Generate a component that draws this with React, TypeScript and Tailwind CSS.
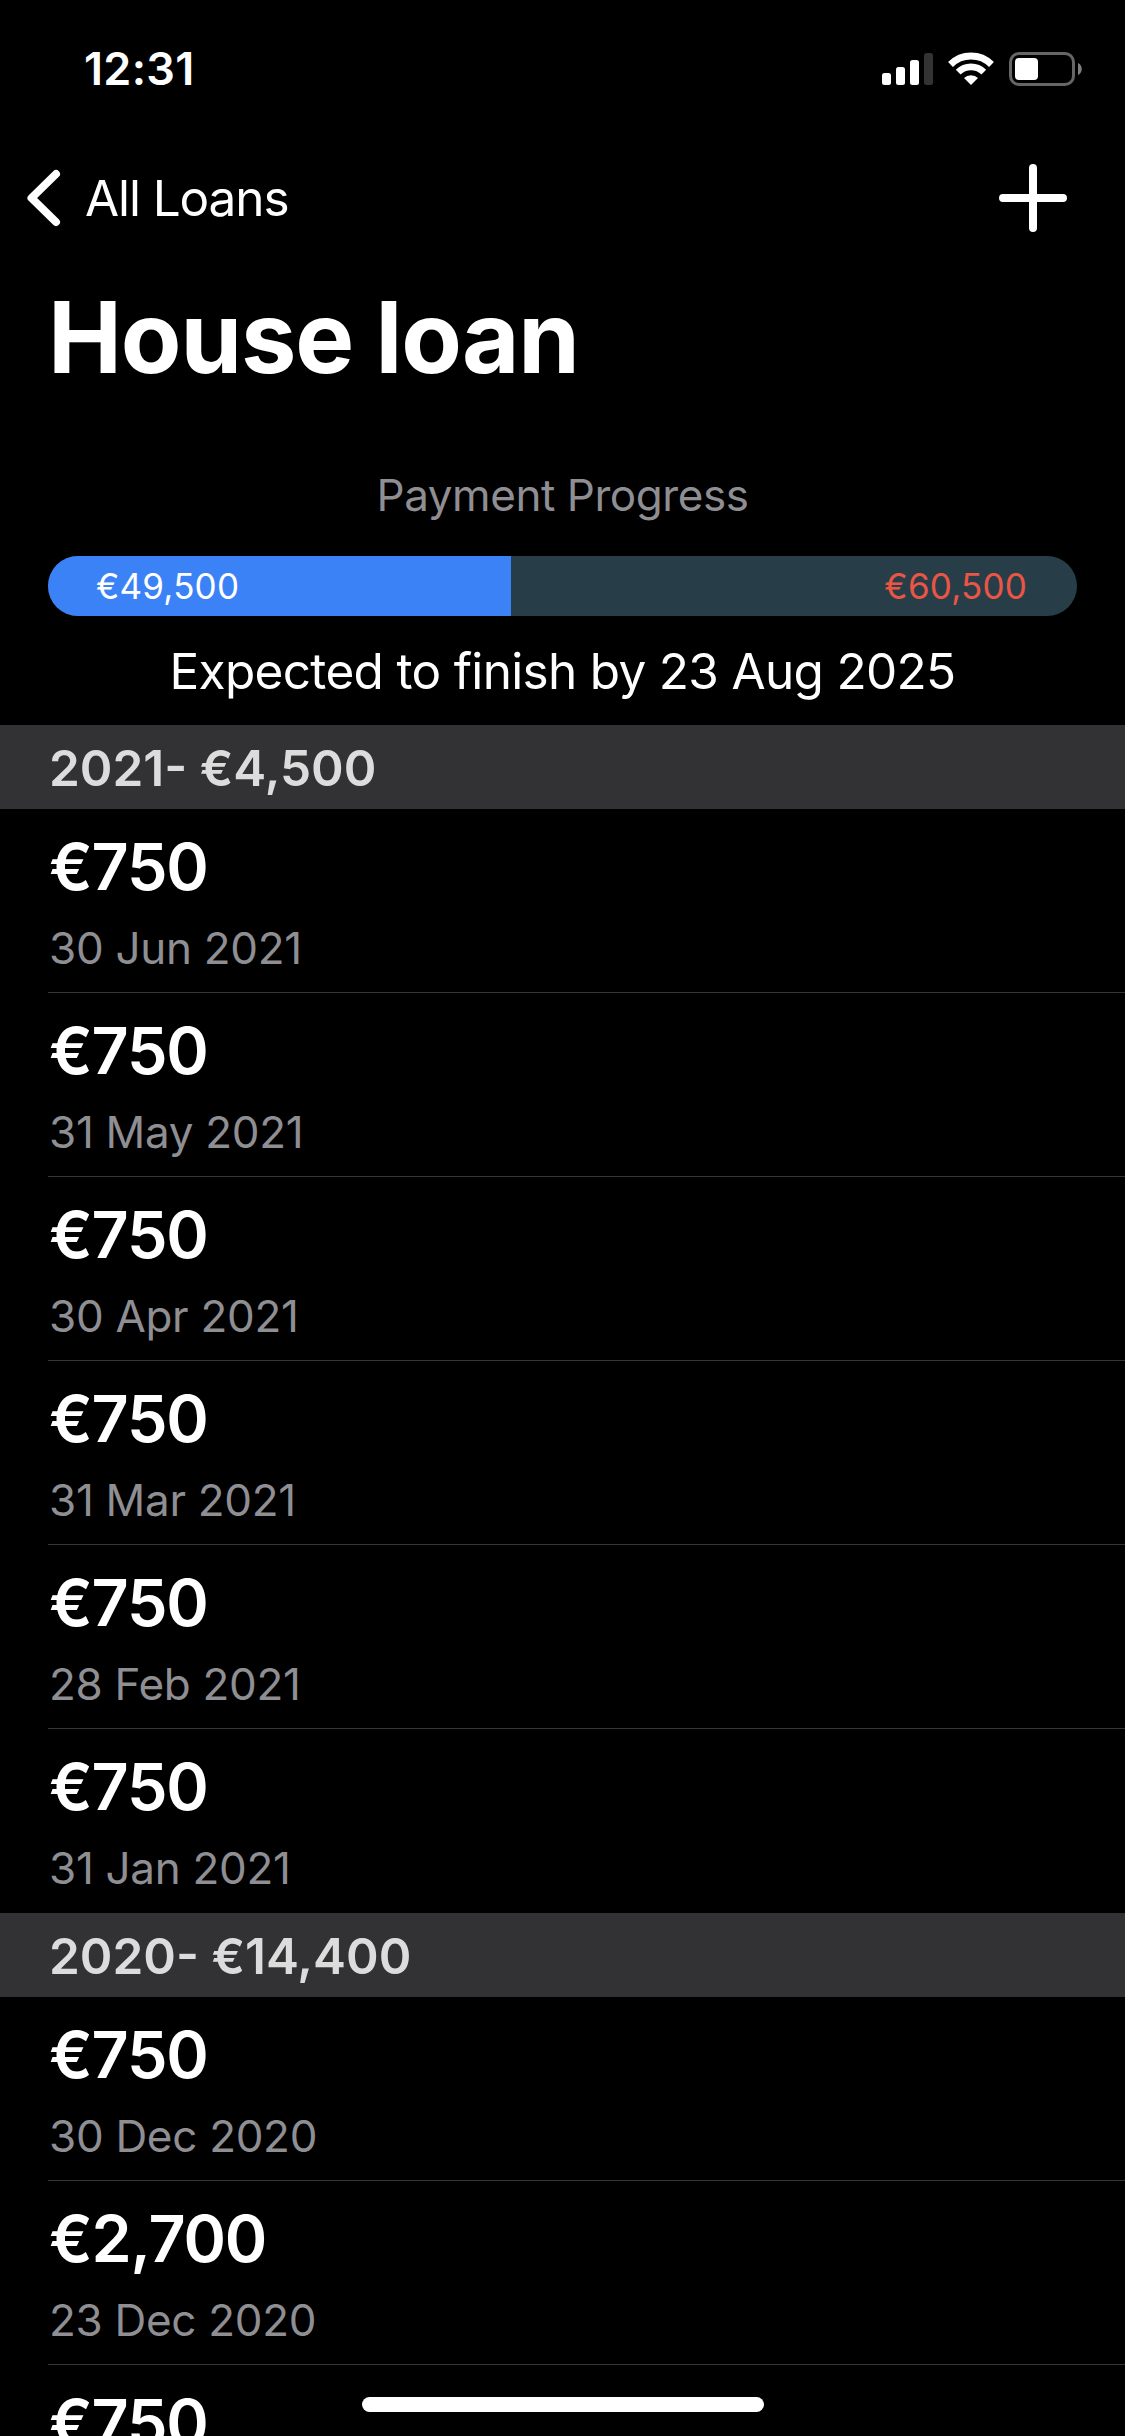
import { clsx } from "clsx"

type Payment = {
  amount: string
  date?: string
}

type YearGroup = {
  title: string
  payments: Payment[]
}

const groups: YearGroup[] = [
  {
    title: "2021- €4,500",
    payments: [
      { amount: "€750", date: "30 Jun 2021" },
      { amount: "€750", date: "31 May 2021" },
      { amount: "€750", date: "30 Apr 2021" },
      { amount: "€750", date: "31 Mar 2021" },
      { amount: "€750", date: "28 Feb 2021" },
      { amount: "€750", date: "31 Jan 2021" },
    ],
  },
  {
    title: "2020- €14,400",
    payments: [
      { amount: "€750", date: "30 Dec 2020" },
      { amount: "€2,700", date: "23 Dec 2020" },
      { amount: "€750" },
    ],
  },
]

const paid = 49500
const remaining = 60500

function StatusBar() {
  return (
    <div className="flex h-[138px] shrink-0 items-start justify-between pl-[84px] pr-[42px]">
      <span className="mt-[42px] text-[45px] leading-[54px] font-semibold tracking-[0.3px]">
        12:31
      </span>
      <div className="mt-[52px] flex items-start">
        <svg width="52" height="34" viewBox="0 0 52 34" fill="#fff">
          <rect x="0" y="21" width="9" height="12" rx="2.5" />
          <rect x="14" y="15" width="9" height="18" rx="2.5" />
          <rect x="28" y="8" width="9" height="25" rx="2.5" />
          <rect x="42" y="1" width="9" height="32" rx="2.5" fill="#333" />
        </svg>
        <svg className="ml-[14px]" width="46" height="34" viewBox="0 0 46 34" fill="none" stroke="#fff">
          <path d="M2.5 12.5a29 29 0 0 1 41 0" strokeWidth="6.8" />
          <path d="M10.2 20.2a18.1 18.1 0 0 1 25.6 0" strokeWidth="6.6" />
          <path d="M23 33l-7-7a10 10 0 0 1 14 0z" fill="#fff" stroke="none" />
        </svg>
        <svg className="ml-[15px]" width="74" height="34" viewBox="0 0 74 34">
          <rect x="1.5" y="1.5" width="63" height="31" rx="8.5" fill="none" stroke="#666" strokeWidth="3" />
          <rect x="6" y="6" width="23" height="22" rx="4" fill="#fff" />
          <path d="M69 11c5 2 5 10 0 12z" fill="#808080" />
        </svg>
      </div>
    </div>
  )
}

function NavBar() {
  return (
    <div className="flex h-[120px] shrink-0 items-center justify-between pl-[27px] pr-[58px]">
      <button className="flex items-center">
        <svg width="34" height="58" viewBox="0 0 34 58" fill="none" stroke="#fff" strokeWidth="8" strokeLinecap="round" strokeLinejoin="round">
          <path d="M29 5 4.5 29 29 53" />
        </svg>
        <span className="ml-[24px] text-[49.5px] leading-[60px] tracking-[-1.1px]">
          All Loans
        </span>
      </button>
      <button>
        <svg width="68" height="68" viewBox="0 0 68 68" stroke="#fff" strokeWidth="8" strokeLinecap="round">
          <path d="M34 4v60M4 34h60" />
        </svg>
      </button>
    </div>
  )
}

function Progress() {
  const ratio = paid / (paid + remaining)
  return (
    <div className="mt-[70px] shrink-0 px-[48px]">
      <p className="text-center text-[44px] leading-[54px] tracking-[-0.45px] text-[#8e8e93]">
        Payment Progress
      </p>
      <div className="relative mt-[34px] flex h-[60px] items-center justify-between overflow-hidden rounded-full bg-[#273e49] pl-[48px] pr-[50px] text-[35px] tracking-[0.2px]">
        <div
          className="absolute inset-y-0 left-0 bg-[#3b82f7]"
          style={{ width: `${ratio * 100}%` }}
        />
        <span className="relative">€{paid.toLocaleString("en-US")}</span>
        <span className="relative text-[#eb5545]">€{remaining.toLocaleString("en-US")}</span>
      </div>
      <p className="mt-[25px] text-center text-[49.5px] leading-[60px] tracking-[-0.68px]">
        Expected to finish by 23 Aug 2025
      </p>
    </div>
  )
}

function PaymentRow({ payment, last }: { payment: Payment; last: boolean }) {
  return (
    <li
      className={clsx(
        "ml-[48px] h-[184px] border-b pl-px",
        last ? "border-transparent" : "border-[#353537]",
      )}
    >
      <p className="pt-[18px] text-[64.5px] leading-[80px] font-semibold tracking-[-1.2px]">
        {payment.amount}
      </p>
      {payment.date && (
        <p className="mt-[14px] text-[44px] leading-[54px] tracking-[-0.3px] text-[#8e8e93]">
          {payment.date}
        </p>
      )}
    </li>
  )
}

export default function App() {
  return (
    <div className="relative flex h-[2436px] w-[1125px] flex-col overflow-hidden bg-black font-['Inter',sans-serif] text-white">
      <StatusBar />
      <NavBar />
      <h1 className="ml-[48px] mt-[18px] shrink-0 text-[99px] leading-[122px] font-bold tracking-[-1.1px]">
        House loan
      </h1>
      <Progress />
      <div className="mt-[24px]">
        {groups.map((group) => (
          <section key={group.title}>
            <h2 className="flex h-[84px] items-center bg-[#323234] pt-[2px] pl-[49px] text-[49.5px] font-semibold text-[#dcdcdd]">
              {group.title}
            </h2>
            <ul>
              {group.payments.map((p, i) => (
                <PaymentRow key={i} payment={p} last={i === group.payments.length - 1} />
              ))}
            </ul>
          </section>
        ))}
      </div>
      {/* home indicator */}
      <div className="absolute bottom-[24px] left-[362px] h-[15px] w-[402px] rounded-full bg-white" />
    </div>
  )
}
